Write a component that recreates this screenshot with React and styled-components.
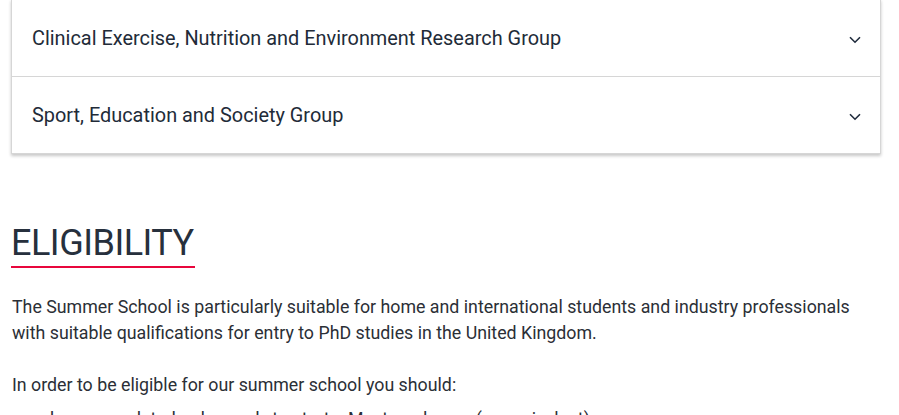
import React from "react";
import styled, { createGlobalStyle } from "styled-components";

const Global = createGlobalStyle`
  html, body { margin: 0; padding: 0; background: #fff; }
  body { font-family: Roboto, "Liberation Sans", sans-serif; color: #2b2f36; }
  * { box-sizing: border-box; }
`;

const Page = styled.div`
  padding: 0 18px 0 11px;
  overflow: hidden;
  height: 415px;
`;

const Accordion = styled.div`
  margin-top: -1px;
  width: 870px;
  background: #fff;
  border: 1px solid #d6d6d6;
  box-shadow: 0 2px 3px rgba(0, 0, 0, 0.22);
`;

const Item = styled.div`
  border-top: ${(p) => (p.$first ? "none" : "1px solid #d6d6d6")};
`;

const Header = styled.button`
  all: unset;
  box-sizing: border-box;
  width: 100%;
  height: 76px;
  display: flex;
  align-items: center;
  justify-content: space-between;
  padding: 0 19px 0 20px;
  font-family: Roboto, "Liberation Sans", sans-serif;
  font-size: 19.9px;
  color: #222b38;
  cursor: pointer;
`;

const ChevronSvg = styled.svg`
  margin-top: 4px;
  flex: none;
`;

const Chevron = () => (
  <ChevronSvg width="12" height="8" viewBox="0 0 12 8" fill="none">
    <path d="M1 1.2 L6 6.2 L11 1.2" stroke="#1f2b3c" strokeWidth="1.6" />
  </ChevronSvg>
);

const Section = styled.section`
  padding-top: 68px;
`;

const Heading = styled.h2`
  display: inline-block;
  margin: 0;
  font-family: Roboto, "Liberation Sans", sans-serif;
  font-weight: 400;
  font-size: 36px;
  line-height: 42px;
  color: #27303d;
  padding: 0 1px 2px 0;
  border-bottom: 2px solid #e8063c;
  letter-spacing: -0.5px;
`;

const Para = styled.p`
  margin: 26px 0 0 1px;
  font-size: 17.8px;
  line-height: 26px;
  color: #2b2f36;
`;

const List = styled.ul`
  margin: 8px 0 0 0;
  padding-left: 39px;
  font-size: 17.8px;
  line-height: 26px;
  color: #2b2f36;
`;

const items = [
  "Clinical Exercise, Nutrition and Environment Research Group",
  "Sport, Education and Society Group",
];

export default function App() {
  return (
    <>
      <Global />
      <Page>
        <Accordion>
          {items.map((t, i) => (
            <Item key={t} $first={i === 0}>
              <Header>
                <span>{t}</span>
                <Chevron />
              </Header>
            </Item>
          ))}
        </Accordion>
        <Section>
          <Heading>ELIGIBILITY</Heading>
          <Para>
            The Summer School is particularly suitable for home and international students and industry professionals
            with suitable qualifications for entry to PhD studies in the United Kingdom.
          </Para>
          <Para>In order to be eligible for our summer school you should:</Para>
          <List>
            <li>have completed or be ready to start a Masters degree (or equivalent)</li>
          </List>
        </Section>
      </Page>
    </>
  );
}
